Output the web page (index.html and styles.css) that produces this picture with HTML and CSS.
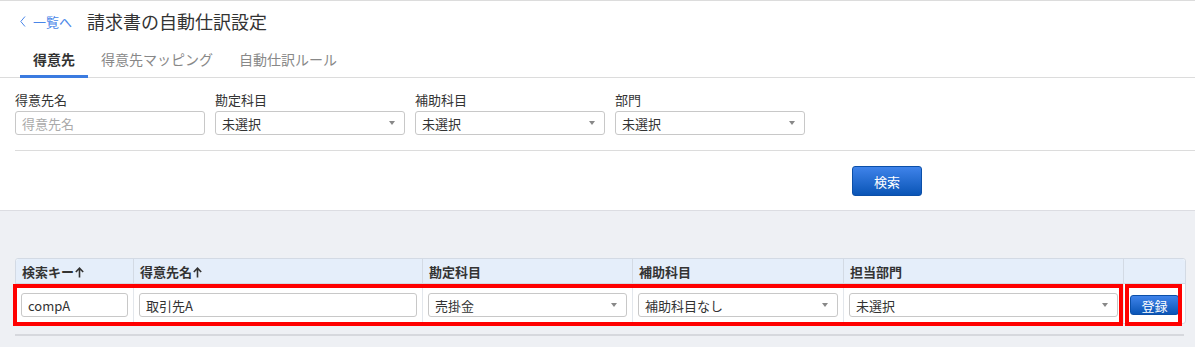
FILE: index.html
```html
<!DOCTYPE html>
<html lang="ja">
<head>
<meta charset="utf-8">
<title>請求書の自動仕訳設定</title>
<link rel="stylesheet" href="styles.css">
</head>
<body>
<div class="page">
  <header class="topbar">
    <a class="back" href="#">
      <svg class="chev" width="6" height="11" viewBox="0 0 6 11"><polyline points="5,0.5 0.8,5.5 5,10.5" fill="none" stroke="#4a86e8" stroke-width="1"/></svg>
      <span>一覧へ</span>
    </a>
    <h1 class="title">請求書の自動仕訳設定</h1>
  </header>

  <nav class="tabs">
    <a class="tab active" href="#">得意先</a>
    <a class="tab" href="#">得意先マッピング</a>
    <a class="tab" href="#">自動仕訳ルール</a>
  </nav>

  <section class="filters">
    <div class="field">
      <label class="label">得意先名</label>
      <input class="input" type="text" placeholder="得意先名">
    </div>
    <div class="field">
      <label class="label">勘定科目</label>
      <div class="select"><span>未選択</span><i class="caret"></i></div>
    </div>
    <div class="field">
      <label class="label">補助科目</label>
      <div class="select"><span>未選択</span><i class="caret"></i></div>
    </div>
    <div class="field">
      <label class="label">部門</label>
      <div class="select"><span>未選択</span><i class="caret"></i></div>
    </div>
  </section>

  <div class="actions">
    <button class="btn btn-search" type="button">検索</button>
  </div>

  <section class="results">
    <div class="table-wrap">
      <table class="grid">
        <colgroup>
          <col class="c1"><col class="c2"><col class="c3"><col class="c4"><col class="c5"><col class="c6">
        </colgroup>
        <thead>
          <tr>
            <th>検索キー<svg class="sort" width="9" height="11" viewBox="0 0 9 11"><path d="M4.5 1.2V10.5M0.8 5L4.5 1.2L8.2 5" fill="none" stroke="#333" stroke-width="1.6"/></svg></th>
            <th>得意先名<svg class="sort" width="9" height="11" viewBox="0 0 9 11"><path d="M4.5 1.2V10.5M0.8 5L4.5 1.2L8.2 5" fill="none" stroke="#333" stroke-width="1.6"/></svg></th>
            <th>勘定科目</th>
            <th>補助科目</th>
            <th>担当部門</th>
            <th></th>
          </tr>
        </thead>
        <tbody>
          <tr>
            <td><input class="input" type="text" value="compA"></td>
            <td><input class="input" type="text" value="取引先A"></td>
            <td><div class="select"><span>売掛金</span><i class="caret"></i></div></td>
            <td><div class="select"><span>補助科目なし</span><i class="caret"></i></div></td>
            <td><div class="select"><span>未選択</span><i class="caret"></i></div></td>
            <td class="btn-cell"><button class="btn btn-save" type="button">登録</button></td>
          </tr>
        </tbody>
      </table>
      <div class="mark mark-row"></div>
      <div class="mark mark-btn"></div>
    </div>
    <div class="scrollbar"></div>
  </section>
</div>
</body>
</html>
```

FILE: styles.css
```css
* { box-sizing: border-box; }
html, body { margin: 0; padding: 0; }
body {
  font-family: "Noto Sans CJK JP", "Noto Sans", sans-serif;
  color: #333;
  background: #fff;
  font-size: 13px;
}
.page { width: 1195px; height: 348px; overflow: hidden; }

.topbar {
  border-top: 1px solid #dcdcdc;
  height: 41px;
  display: flex;
  align-items: center;
  padding-left: 20px;
  gap: 15px;
}
.back {
  display: flex;
  align-items: center;
  gap: 7px;
  color: #4a86e8;
  text-decoration: none;
  font-size: 13px;
  line-height: 1;
}
.title {
  margin: 0;
  font-size: 18px;
  font-weight: normal;
  color: #333;
  line-height: 1;
}

.tabs {
  display: flex;
  padding-left: 20px;
  border-bottom: 1px solid #dcdcdc;
  height: 37px;
}
.tab {
  height: 37px;
  padding: 2px 13px 0;
  display: flex;
  align-items: center;
  font-size: 14px;
  color: #888;
  text-decoration: none;
  border-bottom: 3px solid transparent;
  margin-bottom: -1px;
}
.tab.active {
  color: #333;
  font-weight: bold;
  border-bottom-color: #3b7be0;
}

.filters {
  margin-left: 15px;
  padding: 13px 0 15px;
  border-bottom: 1px solid #dcdcdc;
  display: grid;
  grid-template-columns: repeat(4, 200px);
}
.field { display: flex; flex-direction: column; gap: 2px; }
.label { font-size: 13px; line-height: 18px; color: #333; }

.input, .select {
  height: 24px;
  border: 1px solid #c8c8c8;
  border-radius: 3px;
  background: #fff;
  font-family: inherit;
  font-size: 13px;
  color: #333;
  padding: 0 6px;
}
.field .input, .field .select { width: 190px; }
.input::placeholder { color: #aaa; }
.input { outline: none; }
.select {
  display: flex;
  align-items: center;
  justify-content: space-between;
  padding-right: 9px;
}
.caret {
  width: 0; height: 0;
  border-left: 3px solid transparent;
  border-right: 3px solid transparent;
  border-top: 4px solid #888;
}

.actions {
  padding: 15px 0 14px 852px;
}
.btn {
  font-family: inherit;
  color: #fff;
  border: 1px solid #0b4fa8;
  border-radius: 3px;
  background: linear-gradient(#3f83ea, #0a55b6);
  cursor: pointer;
  padding: 0;
}
.btn-search { width: 70px; height: 30px; font-size: 13px; display: block; }
.btn-save { width: 49px; height: 20px; font-size: 13px; line-height: 1; display: block; margin: 2px auto 0; }

.results {
  border-top: 1px solid #dcdde2;
  background: #eef0f4;
  height: 137px;
  padding: 47px 11px 0 15px;
}
.table-wrap { position: relative; }
.grid {
  width: 1169px;
  border-collapse: separate;
  border-spacing: 0;
  table-layout: fixed;
  background: #fff;
  border: 1px solid #d3dae4;
  border-radius: 3px;
}
.c1 { width: 118px; }
.c2 { width: 289px; }
.c3 { width: 210px; }
.c4 { width: 211px; }
.c5 { width: 280px; }
.c6 { width: 61px; }
.grid th {
  background: #e5eefa;
  height: 25px;
  text-align: left;
  font-size: 13px;
  font-weight: bold;
  padding: 0 6px;
  border-right: 1px solid #d3dae4;
  border-bottom: 1px solid #d3dae4;
  white-space: nowrap;
}
.grid th:last-child, .grid td:last-child { border-right: none; }
.grid th:first-child { border-top-left-radius: 3px; }
.grid th:last-child { border-top-right-radius: 3px; }
.sort { vertical-align: -1px; margin-left: 1px; }
.grid td {
  padding: 9px 5px 6px;
  border-right: 1px solid #e3e7ec;
  vertical-align: top;
}
.grid td .input, .grid td .select { width: 100%; display: flex; }
.grid td:first-child { padding-left: 5px; }

.mark {
  position: absolute;
  top: 26px;
  height: 42px;
  border: 4px solid #ff0000;
  pointer-events: none;
}
.mark-row { left: -2px; width: 1110px; }
.mark-btn { left: 1110px; width: 57px; }

.scrollbar {
  margin-top: 10px;
  width: 1169px;
  height: 2px;
  background: #d6d8dd;
}
```
